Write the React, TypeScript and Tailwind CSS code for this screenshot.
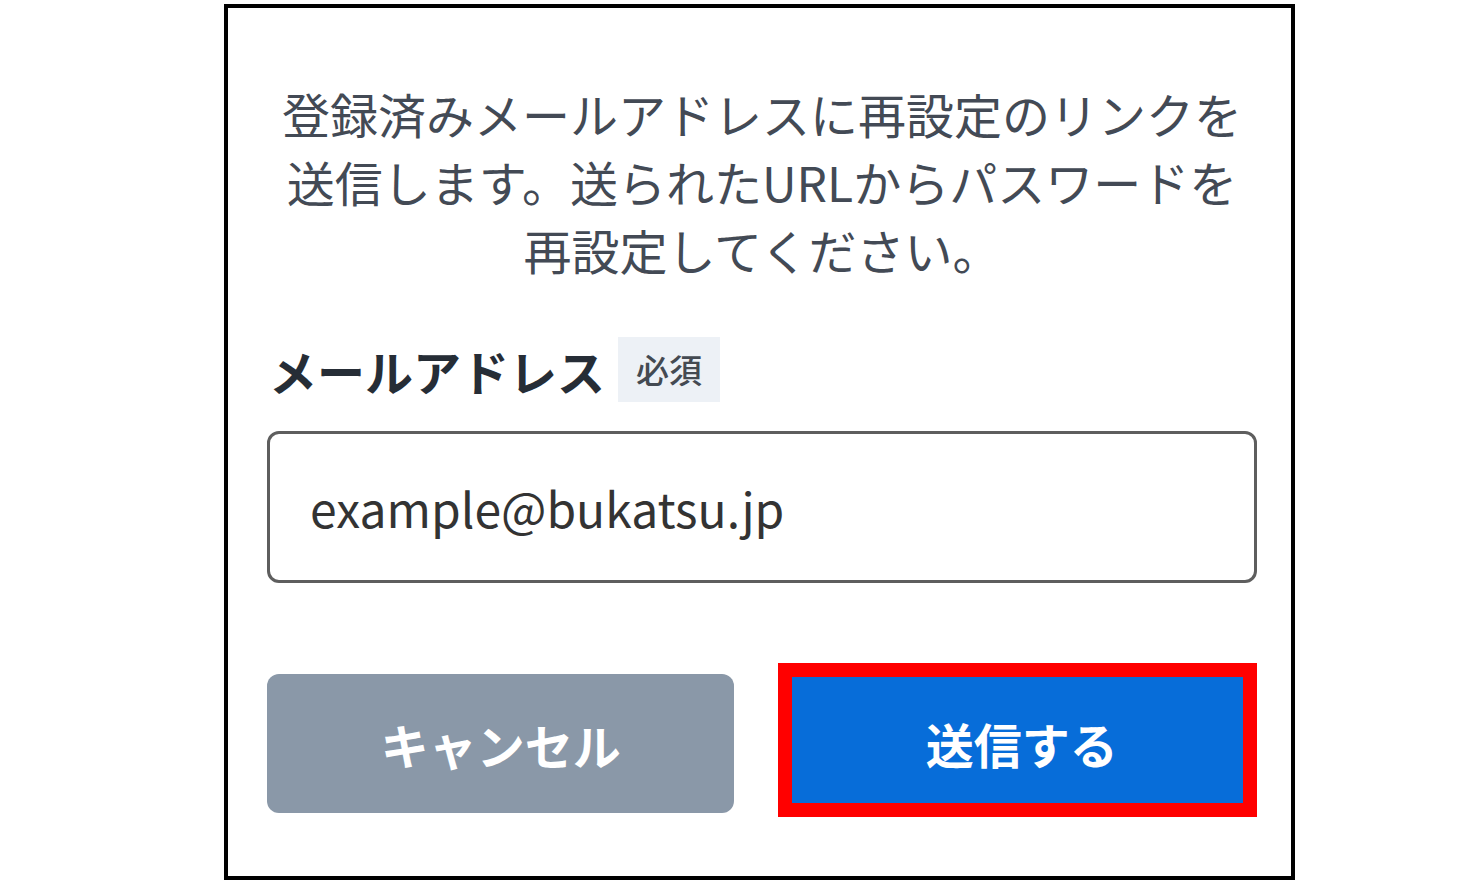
export default function App() {
  return (
    <div className="min-h-screen bg-white pl-[224px] pt-[4px] font-['Noto_Sans_CJK_JP','Noto_Sans',sans-serif]">
      <div className="h-[876px] w-[1071px] border-[4px] border-black">
        <div className="ml-[39px] w-[990px] pt-[71px]">
          <p className="text-center text-[48px] leading-[68px] text-[#434a55]">
            登録済みメールアドレスに再設定のリンクを
            <br />
            送信します。送られたURLからパスワードを
            <br />
            再設定してください。
          </p>

          <div className="mt-[54px] flex items-center gap-[13px] pl-[2px]">
            <span className="text-[48px] font-bold leading-none text-[#262d36]">メールアドレス</span>
            <span className="flex h-[65px] w-[102px] items-center justify-center bg-[#edf1f6] text-[33px] font-medium text-[#444a52]">
              必須
            </span>
          </div>

          <div className="mt-[29px] flex h-[152px] items-center rounded-[12px] border-[3px] border-[#5e5e5e] pl-[40px]">
            <span className="text-[48px] text-[#333333]">example@bukatsu.jp</span>
          </div>

          <div className="mt-[80px] flex items-start">
            <button className="mt-[11px] flex h-[139px] w-[469px] items-center justify-center rounded-[12px] bg-[#8a98a8] text-[48px] font-bold text-white">
              キャンセル
            </button>
            <div className="ml-[44px] h-[154px] w-[480px] border-[14px] border-[#ff0000]">
              <button className="flex h-full w-full items-center justify-center bg-[#076dd9] pl-[8px] pt-[6px] text-[48px] font-bold text-white">
                送信する
              </button>
            </div>
          </div>
        </div>
      </div>
    </div>
  );
}
